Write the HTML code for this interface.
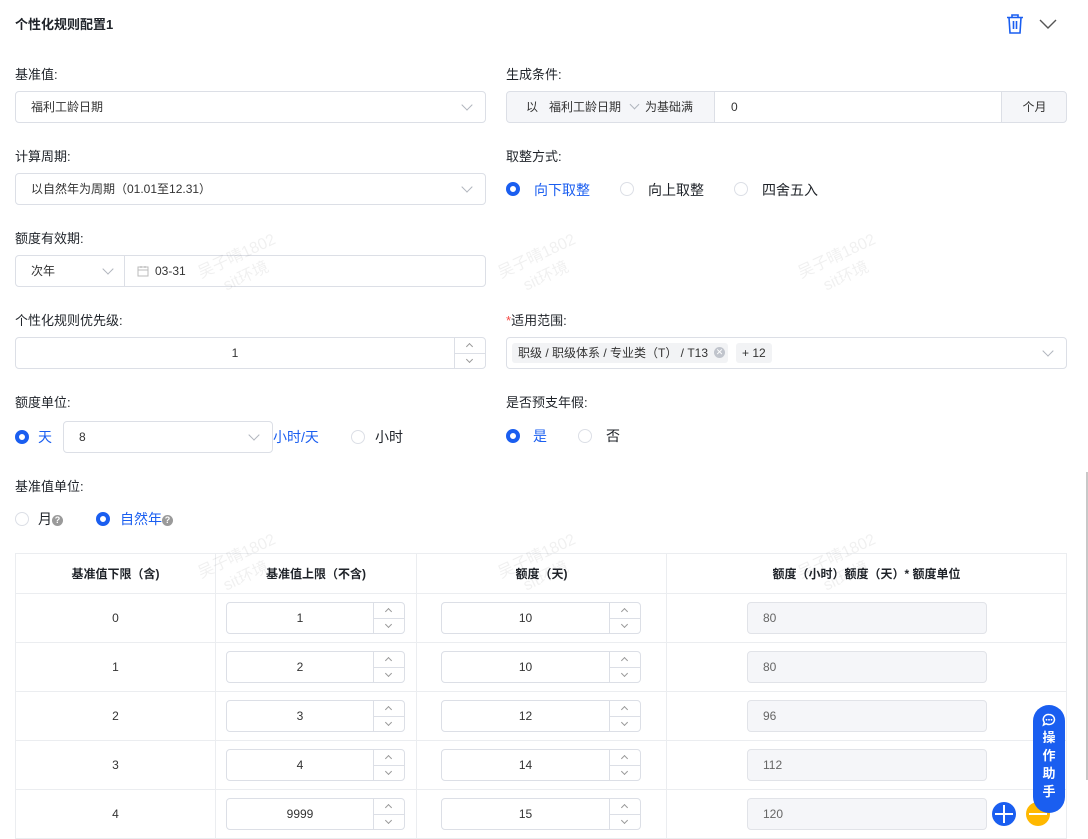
<!DOCTYPE html>
<html><head><meta charset="utf-8">
<style>
*{box-sizing:border-box;margin:0;padding:0}
body{width:1088px;height:839px;overflow:hidden;background:#fff;position:relative;font-family:"Liberation Sans","Noto Sans CJK SC",sans-serif;font-size:13px;color:#1f2329}
.a{position:absolute}
.lbl{position:absolute;font-size:13px;color:#1f2329;line-height:18px}
.box{position:absolute;border:1px solid #dcdfe6;border-radius:4px;background:#fff;height:32px;line-height:30px;font-size:12px;color:#333}
.chev{position:absolute;width:8px;height:8px;border-right:1px solid #b0b5bd;border-bottom:1px solid #b0b5bd;transform:rotate(45deg)}
.rad{position:absolute;width:14px;height:14px;border-radius:50%;border:1px solid #dcdfe6;background:#fff}
.rad.on{border:4px solid #1a5ef0}
.rt{position:absolute;font-size:14px;line-height:18px}
.blue{color:#1a5ef0}
.step{position:absolute;right:0;top:0;width:31px;height:30px;border-left:1px solid #dcdfe6}
.step:after{content:"";position:absolute;left:0;right:0;top:15px;border-top:1px solid #dcdfe6}
.up,.dn{position:absolute;left:12px;width:5px;height:5px;border-left:1px solid #999;border-top:1px solid #999}
.up{top:6px;transform:rotate(45deg)}
.dn{top:19px;transform:rotate(225deg)}
table{position:absolute;left:15px;top:553px;border-collapse:collapse;width:1052px}
td,th{border:1px solid #ebedf0;height:49px;text-align:center;font-size:12px;color:#333;position:relative}
th{height:40px;font-weight:bold;color:#1f2329}
.num{position:absolute;height:32px;top:8px;border:1px solid #dcdfe6;border-radius:4px;line-height:30px;font-size:12px;text-align:center;padding-right:31px}
.dis{position:absolute;left:80px;top:8px;width:240px;height:32px;background:#f5f6f9;border:1px solid #e1e3e8;border-radius:4px;line-height:30px;text-align:left;padding-left:15px;color:#666;font-size:12px}
.q{display:inline-block;width:11px;height:11px;border-radius:50%;background:#9a9a9a;color:#fff;font-size:9px;line-height:11px;text-align:center;vertical-align:1px;font-weight:bold}
.wm{position:absolute;color:rgba(0,0,0,0.06);font-size:16px;transform:rotate(-25deg);line-height:22px;text-align:center}
</style></head><body>

<div class="lbl" style="left:15px;top:16px;font-weight:bold">个性化规则配置1</div>
<svg class="a" style="left:1005px;top:13px" width="20" height="22" viewBox="0 0 20 22"><path d="M2 4.5h16M7 4.5V2h6v2.5M4 4.5l1 15.5h10l1-15.5M8.5 8v8M11.5 8v8" fill="none" stroke="#1a5ef0" stroke-width="1.6"/></svg>
<svg class="a" style="left:1039px;top:18px" width="18" height="12" viewBox="0 0 18 12"><path d="M1 2l8 8 8-8" fill="none" stroke="#555" stroke-width="1.4"/></svg>

<div class="lbl" style="left:15px;top:66px">基准值:</div>
<div class="box" style="left:15px;top:91px;width:471px;padding-left:15px">福利工龄日期<span class="chev" style="right:14px;top:9px"></span></div>

<div class="lbl" style="left:506px;top:66px">生成条件:</div>
<div class="box" style="left:506px;top:91px;width:561px;background:#f5f6f9">
 <div class="a" style="left:0;top:0;width:208px;height:30px;font-size:12px"><span class="a" style="left:19px">以</span><span class="a" style="left:42px">福利工龄日期</span><span class="chev" style="left:124px;top:9px;width:7px;height:7px"></span><span class="a" style="left:138px">为基础满</span></div>
 <div class="a" style="left:207px;top:-1px;width:288px;height:32px;line-height:30px;background:#fff;border:1px solid #dcdfe6;padding-left:16px">0</div>
 <div class="a" style="left:495px;top:0;width:65px;text-align:center">个月</div>
</div>

<div class="lbl" style="left:15px;top:148px">计算周期:</div>
<div class="box" style="left:15px;top:173px;width:471px;padding-left:15px">以自然年为周期（01.01至12.31）<span class="chev" style="right:14px;top:9px"></span></div>

<div class="lbl" style="left:506px;top:148px">取整方式:</div>
<div class="rad on" style="left:506px;top:182px"></div><div class="rt blue" style="left:534px;top:181px">向下取整</div>
<div class="rad" style="left:620px;top:182px"></div><div class="rt" style="left:648px;top:181px">向上取整</div>
<div class="rad" style="left:734px;top:182px"></div><div class="rt" style="left:762px;top:181px">四舍五入</div>

<div class="lbl" style="left:15px;top:230px">额度有效期:</div>
<div class="box" style="left:15px;top:255px;width:471px">
 <span class="a" style="left:15px">次年</span><span class="chev" style="left:88px;top:9px"></span>
 <div class="a" style="left:108px;top:0;height:30px;border-left:1px solid #dcdfe6;width:1px"></div>
 <svg class="a" style="left:121px;top:9px" width="12" height="12" viewBox="0 0 12 12"><rect x="1" y="2" width="10" height="9" fill="none" stroke="#bbb"/><path d="M1 5h10M4 1v2M8 1v2" stroke="#bbb"/></svg>
 <span class="a" style="left:139px">03-31</span>
</div>

<div class="lbl" style="left:15px;top:312px">个性化规则优先级:</div>
<div class="box" style="left:15px;top:337px;width:471px;text-align:center;padding-right:31px">1<div class="step"><i class="up"></i><i class="dn"></i></div></div>

<div class="lbl" style="left:506px;top:312px"><span style="color:#f54a45">*</span>适用范围:</div>
<div class="box" style="left:506px;top:337px;width:561px">
 <span class="a" style="left:5px;top:5px;height:20px;line-height:20px;background:#f2f3f5;border-radius:3px;padding:0 20px 0 6px;font-size:12px">职级 / 职级体系 / 专业类（T） / T13<span class="a" style="right:3px;top:4px;width:11px;height:11px;border-radius:50%;background:#c0c4cc;color:#fff;font-size:9px;line-height:11px;text-align:center">✕</span></span>
 <span class="a" style="left:229px;top:5px;height:20px;line-height:20px;background:#f2f3f5;border-radius:3px;padding:0 6px;font-size:12px">+ 12</span>
 <span class="chev" style="right:14px;top:9px"></span>
</div>

<div class="lbl" style="left:15px;top:394px">额度单位:</div>
<div class="rad on" style="left:15px;top:430px"></div><div class="rt blue" style="left:38px;top:428px">天</div>
<div class="box" style="left:63px;top:421px;width:210px;padding-left:15px">8<span class="chev" style="right:14px;top:9px"></span></div>
<div class="rt blue" style="left:273px;top:428px">小时/天</div>
<div class="rad" style="left:351px;top:430px"></div><div class="rt" style="left:375px;top:428px">小时</div>

<div class="lbl" style="left:506px;top:394px">是否预支年假:</div>
<div class="rad on" style="left:506px;top:429px"></div><div class="rt blue" style="left:533px;top:427px">是</div>
<div class="rad" style="left:578px;top:429px"></div><div class="rt" style="left:606px;top:427px">否</div>

<div class="lbl" style="left:15px;top:478px">基准值单位:</div>
<div class="rad" style="left:15px;top:512px"></div><div class="rt" style="left:38px;top:510px">月<span class="q">?</span></div>
<div class="rad on" style="left:96px;top:512px"></div><div class="rt blue" style="left:120px;top:510px">自然年<span class="q">?</span></div>

<table>
<tr><th style="width:200px">基准值下限（含)</th><th style="width:201px">基准值上限（不含)</th><th style="width:250px">额度（天)</th><th>额度（小时）额度（天）* 额度单位</th></tr>
<tr><td>0</td><td><div class="num" style="left:10px;width:179px">1<div class="step"><i class="up"></i><i class="dn"></i></div></div></td><td><div class="num" style="left:24px;width:200px">10<div class="step"><i class="up"></i><i class="dn"></i></div></div></td><td><div class="dis">80</div></td></tr>
<tr><td>1</td><td><div class="num" style="left:10px;width:179px">2<div class="step"><i class="up"></i><i class="dn"></i></div></div></td><td><div class="num" style="left:24px;width:200px">10<div class="step"><i class="up"></i><i class="dn"></i></div></div></td><td><div class="dis">80</div></td></tr>
<tr><td>2</td><td><div class="num" style="left:10px;width:179px">3<div class="step"><i class="up"></i><i class="dn"></i></div></div></td><td><div class="num" style="left:24px;width:200px">12<div class="step"><i class="up"></i><i class="dn"></i></div></div></td><td><div class="dis">96</div></td></tr>
<tr><td>3</td><td><div class="num" style="left:10px;width:179px">4<div class="step"><i class="up"></i><i class="dn"></i></div></div></td><td><div class="num" style="left:24px;width:200px">14<div class="step"><i class="up"></i><i class="dn"></i></div></div></td><td><div class="dis">112</div></td></tr>
<tr><td>4</td><td><div class="num" style="left:10px;width:179px">9999<div class="step"><i class="up"></i><i class="dn"></i></div></div></td><td><div class="num" style="left:24px;width:200px">15<div class="step"><i class="up"></i><i class="dn"></i></div></div></td><td><div class="dis">120</div></td></tr>
</table>

<svg class="a" style="left:992px;top:802px" width="24" height="24" viewBox="0 0 24 24"><circle cx="12" cy="12" r="12" fill="#1a5ef0"/><path d="M12 3v18M3 12h18" stroke="#fff" stroke-width="2"/></svg>
<svg class="a" style="left:1026px;top:802px" width="24" height="24" viewBox="0 0 24 24"><circle cx="12" cy="12" r="12" fill="#ffb800"/><path d="M3 12h18" stroke="#fff" stroke-width="2"/></svg>
<div class="a" style="left:1033px;top:705px;width:32px;height:108px;background:#1a5ef0;border-radius:16px;color:#fff;text-align:center;font-size:13px;font-weight:bold;line-height:18px;padding-top:8px">
<svg width="14" height="14" viewBox="0 0 14 14" style="display:block;margin:0 auto 2px"><path d="M7 1.5a5.5 5 0 1 1-3 9.2L1.5 12l.8-2.6A5 5 0 0 1 7 1.5z" fill="none" stroke="#fff" stroke-width="1.5"/><circle cx="4.5" cy="6.8" r=".9" fill="#fff"/><circle cx="7" cy="6.8" r=".9" fill="#fff"/><circle cx="9.5" cy="6.8" r=".9" fill="#fff"/></svg>操<br>作<br>助<br>手</div>
<div class="a" style="left:1086px;top:472px;width:2px;height:308px;background:#c8c8c8"></div>

<div class="wm" style="left:200px;top:245px">吴子晴1802<br>sit环境</div>
<div class="wm" style="left:500px;top:245px">吴子晴1802<br>sit环境</div>
<div class="wm" style="left:800px;top:245px">吴子晴1802<br>sit环境</div>
<div class="wm" style="left:200px;top:545px">吴子晴1802<br>sit环境</div>
<div class="wm" style="left:500px;top:545px">吴子晴1802<br>sit环境</div>
<div class="wm" style="left:800px;top:545px">吴子晴1802<br>sit环境</div>
</body></html>
